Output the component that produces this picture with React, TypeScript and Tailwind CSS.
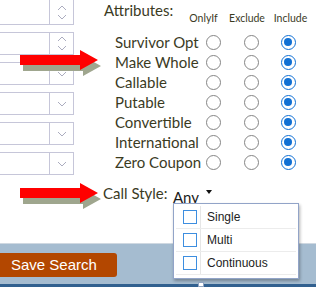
import React from "react";

const labelFont = { fontFamily: "Lato, 'Open Sans', sans-serif" };

const attributes = [
  "Survivor Opt",
  "Make Whole",
  "Callable",
  "Putable",
  "Convertible",
  "International",
  "Zero Coupon",
];

const callStyles = ["Single", "Multi", "Continuous"];

function Chevron({ up }: { up?: boolean }) {
  return (
    <svg width="10" height="6" viewBox="0 0 10 6" className="block">
      <polyline
        points={up ? "1,5 5,1 9,5" : "1,1 5,5 9,1"}
        fill="none"
        stroke="#abacbf"
        strokeWidth="1"
      />
    </svg>
  );
}

function InputBox({ spinner, first }: { spinner?: boolean; first?: boolean }) {
  return (
    <div
      className={`flex w-[74px] border border-l-0 border-[#c6c6d9] bg-white ${
        first ? "h-[26px] -mt-[1px]" : "h-[23px] mt-[7px]"
      }`}
    >
      <div className="flex-1" />
      <div className="w-[24px] border-l border-[#c6c6d9] flex flex-col items-center justify-center gap-[3px]">
        {spinner ? (
          <>
            <Chevron up />
            <Chevron />
          </>
        ) : (
          <Chevron />
        )}
      </div>
    </div>
  );
}

function Radio({ checked }: { checked?: boolean }) {
  if (checked) {
    return (
      <div className="w-[15px] h-[15px] rounded-full border-[1.5px] border-[#1170d4] bg-white flex items-center justify-center">
        <div className="w-[8px] h-[8px] rounded-full bg-[#1170d4]" />
      </div>
    );
  }
  return <div className="w-[15px] h-[15px] rounded-full border border-[#858585] bg-white" />;
}

function Arrow({ y }: { y: number }) {
  const pts = (dx: number, dy: number) =>
    [
      [20, y - 5],
      [80, y - 5],
      [80, y - 10],
      [98, y],
      [80, y + 10],
      [80, y + 5],
      [20, y + 5],
    ]
      .map(([px, py]) => `${px + dx},${py + dy}`)
      .join(" ");
  return (
    <>
      <polygon points={pts(3, 6)} fill="#9fa68e" />
      <polygon points={pts(0, 0)} fill="#ff0000" />
    </>
  );
}

export default function App() {
  return (
    <div className="relative w-[316px] h-[287px] overflow-hidden bg-white">
      <div className="flex h-[243px]">
        <div className="w-[74px] flex flex-col">
          <InputBox spinner first />
          <InputBox spinner />
          <InputBox />
          <InputBox />
          <InputBox />
          <InputBox />
        </div>

        <div className="flex-1 flex flex-col text-[#3b3b1f]" style={labelFont}>
          <div className="flex h-[32px]">
            <span className="w-[84px] ml-[30px] mt-[1px] text-[15px] leading-[18px] whitespace-nowrap">
              Attributes:
            </span>
            <div className="flex mt-[12px] text-[10.5px] leading-[12px] whitespace-nowrap">
              <div className="w-[31px] flex justify-center">OnlyIf</div>
              <div className="w-[56px] flex justify-center">Exclude</div>
              <div className="w-[31px] flex justify-center">Include</div>
            </div>
          </div>

          {attributes.map((name) => (
            <div key={name} className="flex items-center h-[20px]">
              <span className="w-[79px] ml-[41px] text-[15px] leading-[18px] whitespace-nowrap">
                {name}
              </span>
              <div className="w-[38px] flex justify-center">
                <Radio />
              </div>
              <div className="w-[38px] flex justify-center">
                <Radio />
              </div>
              <div className="w-[36px] flex justify-center">
                <Radio checked />
              </div>
            </div>
          ))}

          <div className="flex items-start mt-[12px] h-[18px]">
            <span className="w-[70px] ml-[29px] text-[15px] leading-[18px] whitespace-nowrap">
              Call Style:
            </span>
            <span className="pt-[4px] text-[15px] leading-[18px] text-[#1a1a1a]">Any</span>
            <svg width="6" height="4" viewBox="0 0 6 4" className="ml-[7px] mt-[6px]">
              <polygon points="0,0 6,0 3,4" fill="#111" />
            </svg>
          </div>
        </div>
      </div>

      <div className="h-[44px] bg-[#a5bcd0] border-t border-[#cfd8e1] border-b-[3px] border-b-[#31608f]">
        <button
          className="mt-[9px] w-[117px] h-[24px] bg-[#b34700] rounded-r-[3px] text-white text-[15px] leading-[24px] text-left pl-[11px]"
          style={{ fontFamily: "'Liberation Sans', Arial, sans-serif" }}
        >
          Save Search
        </button>
      </div>

      <svg
        className="absolute left-0 top-0 pointer-events-none"
        width="316"
        height="287"
        viewBox="0 0 316 287"
      >
        <Arrow y={60} />
        <Arrow y={193} />
      </svg>

      <div
        className="absolute left-[173px] top-[203px] w-[126px] h-[76px] bg-white border border-[#92a4c8] shadow-[1px_2px_3px_rgba(0,0,0,0.3)] p-[2px]"
        style={{ fontFamily: "'Liberation Sans', Arial, sans-serif" }}
      >
        {callStyles.map((s) => (
          <div key={s} className="flex h-[23px] border-b border-[#ececec]">
            <div className="w-[25px] border-r border-[#e6e6e6] flex items-center pl-[7px]">
              <div className="w-[14px] h-[14px] border-[1.5px] border-[#3d8ee0] bg-white" />
            </div>
            <div className="flex items-center pl-[6px] text-[12px] text-[#222]">{s}</div>
          </div>
        ))}
      </div>

      <div className="absolute left-[198px] top-[282px] w-[6px] h-[5px] bg-white border border-[#8fa3c0]" />
    </div>
  );
}
